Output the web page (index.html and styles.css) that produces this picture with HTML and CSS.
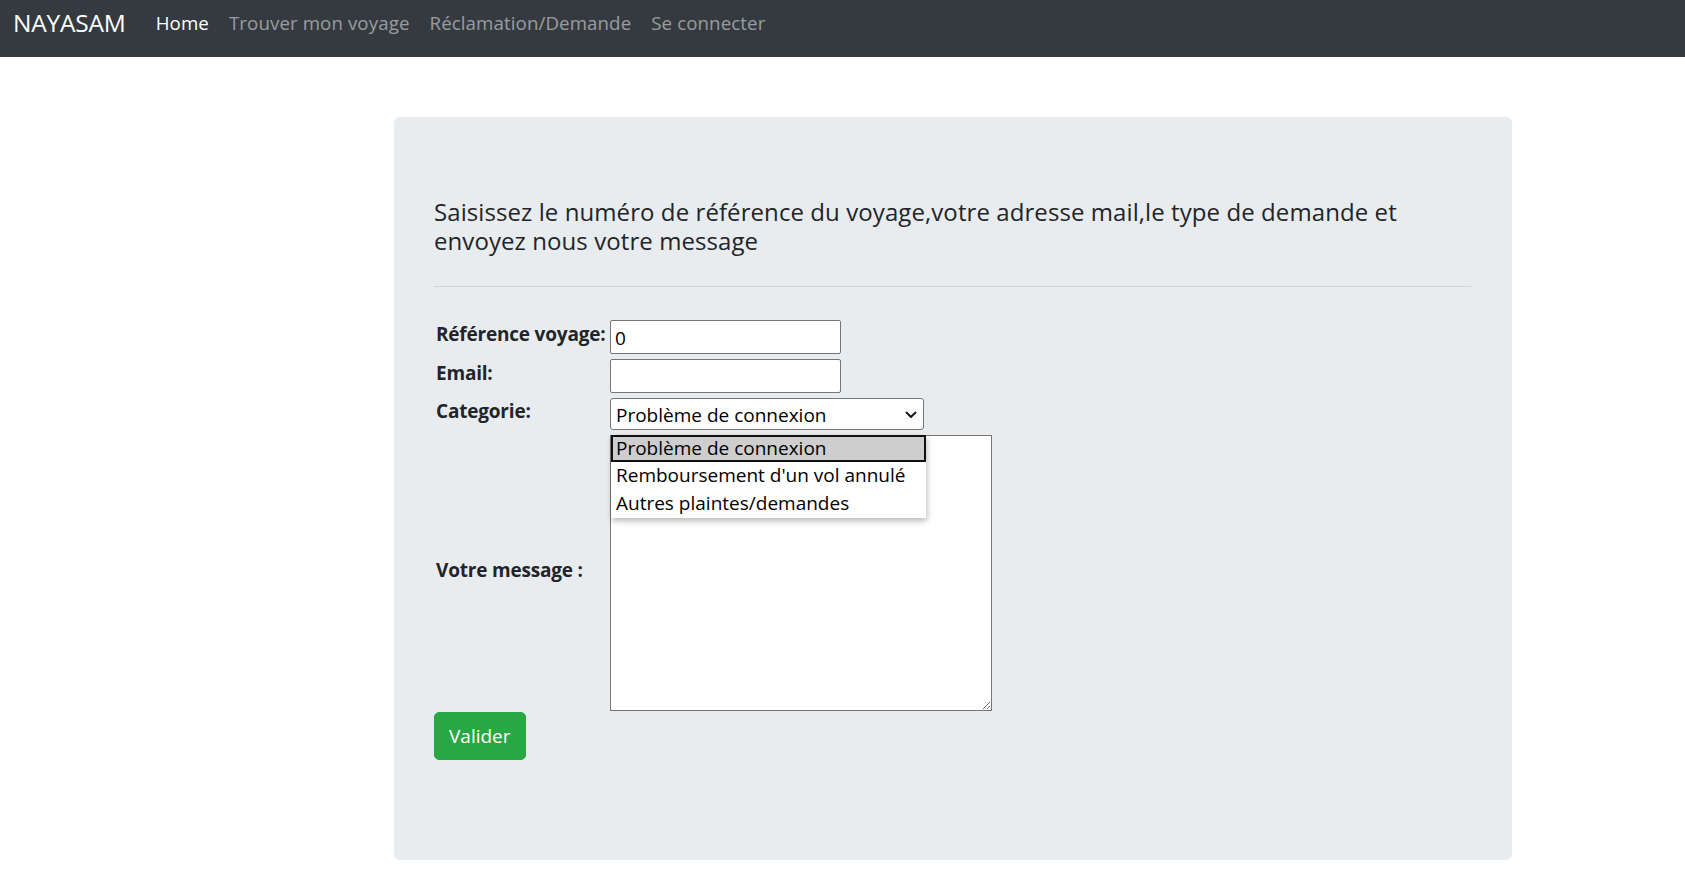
FILE: index.html
```html
<!DOCTYPE html>
<html lang="fr">
<head>
<meta charset="utf-8">
<title>NAYASAM - Réclamation/Demande</title>
<link rel="stylesheet" href="styles.css">
</head>
<body>
<nav class="navbar">
  <a class="brand" href="#">NAYASAM</a>
  <ul class="nav">
    <li><a class="nav-link active" href="#">Home</a></li>
    <li><a class="nav-link" href="#">Trouver mon voyage</a></li>
    <li><a class="nav-link" href="#">Réclamation/Demande</a></li>
    <li><a class="nav-link" href="#">Se connecter</a></li>
  </ul>
</nav>
<main class="page">
  <section class="jumbotron">
    <h4 class="lead-title">Saisissez le numéro de référence du voyage,votre adresse mail,le type de demande et envoyez nous votre message</h4>
    <hr class="divider">
    <form class="claim-form">
      <div class="fields">
        <label class="field-label" for="ref">Référence voyage:</label>
        <input class="field-input" id="ref" type="text" value="0">
        <label class="field-label" for="email">Email:</label>
        <input class="field-input" id="email" type="text" value="">
        <label class="field-label" for="cat">Categorie:</label>
        <div class="select-wrap">
          <select class="field-select" id="cat">
            <option>Problème de connexion</option>
            <option>Remboursement d'un vol annulé</option>
            <option>Autres plaintes/demandes</option>
          </select>
          <svg class="chevron" width="12" height="8" viewBox="0 0 12 8"><path d="M1.5 1.5 L6 6 L10.5 1.5" fill="none" stroke="#111" stroke-width="1.8" stroke-linecap="round" stroke-linejoin="round"/></svg>
          <ul class="dropdown">
            <li class="option selected">Problème de connexion</li>
            <li class="option">Remboursement d'un vol annulé</li>
            <li class="option">Autres plaintes/demandes</li>
          </ul>
        </div>
        <label class="field-label" for="msg">Votre message :</label>
        <textarea class="field-textarea" id="msg"></textarea>
      </div>
      <button class="btn-valider" type="button">Valider</button>
    </form>
  </section>
</main>
</body>
</html>
```
FILE: styles.css
```css
* { box-sizing: border-box; }
html, body { margin: 0; padding: 0; }
body {
  font-family: "Open Sans", "Noto Sans", sans-serif;
  color: #212529;
  background: #fff;
}
.navbar {
  height: 57px;
  background: #343a40;
  display: flex;
  align-items: center;
  padding: 0 0 12px 13px;
}
.brand {
  color: #fff;
  text-decoration: none;
  font-size: 24.5px;
  letter-spacing: -0.2px;
  margin-right: 20px;
}
.nav {
  list-style: none;
  margin: 0;
  padding: 0;
  display: flex;
}
.nav-link {
  display: block;
  padding: 0 10px;
  font-size: 18.7px;
  letter-spacing: 0.1px;
  color: rgba(255,255,255,.5);
  text-decoration: none;
}
.nav-link.active { color: #fff; }

.page {
  padding: 60px 0 31px 394px;
}
.jumbotron {
  width: 1118px;
  background: #e9ecef;
  border-radius: 6px;
  padding: 81px 41px 100px 40px;
}
.lead-title {
  margin: 0;
  font-size: 24px;
  font-weight: 400;
  line-height: 28.8px;
  letter-spacing: 0.08px;
  color: #212529;
}
.divider {
  margin: 30px 0 33px;
  border: 0;
  border-top: 1px solid rgba(0,0,0,.1);
}
.claim-form { margin: 0; }
.fields {
  display: grid;
  grid-template-columns: 176px auto;
  row-gap: 5px;
  align-items: center;
  justify-items: start;
}
.field-label {
  font-weight: 700;
  font-size: 19px;
  letter-spacing: -0.2px;
  padding: 0 0 6px 2px;
  color: #212529;
}
.field-input {
  width: 231px;
  height: 34px;
  margin: 0;
  padding: 2px 4px 0;
  border: 1px solid #767676;
  border-radius: 2px;
  background: #fff;
  font-family: inherit;
  font-size: 19px;
  color: #000;
}
.select-wrap {
  position: relative;
  width: 314px;
  height: 32px;
}
.field-select {
  appearance: none;
  -webkit-appearance: none;
  width: 314px;
  height: 32px;
  margin: 0;
  padding: 3px 24px 0 5px;
  border: 1px solid #767676;
  border-radius: 3px;
  background: #fff;
  font-family: inherit;
  font-size: 19px;
  color: #000;
}
.chevron {
  position: absolute;
  right: 7px;
  top: 13px;
  pointer-events: none;
}
.dropdown {
  position: absolute;
  top: 37px;
  left: 1px;
  width: 315px;
  margin: 0;
  padding: 0;
  list-style: none;
  background: #fff;
  box-shadow: 1px 3px 6px rgba(0,0,0,.28);
  z-index: 5;
}
.option {
  height: 28px;
  line-height: 27px;
  padding: 0 5px;
  font-size: 19px;
  color: #000;
  white-space: nowrap;
}
.option.selected {
  height: 27px;
  line-height: 23px;
  background: #cecece;
  border: 2px solid #101010;
  padding: 0 3px;
}
.field-textarea {
  width: 382px;
  height: 276px;
  margin: 0;
  border: 1px solid #767676;
  border-radius: 0;
  background: #fff;
  font-family: inherit;
  font-size: 16px;
}
.btn-valider {
  display: block;
  margin-top: 1px;
  height: 48px;
  padding: 0 14px;
  border: 1px solid #28a745;
  border-radius: 5px;
  background: #28a745;
  color: #fff;
  font-family: inherit;
  font-size: 19px;
  cursor: pointer;
}
```
